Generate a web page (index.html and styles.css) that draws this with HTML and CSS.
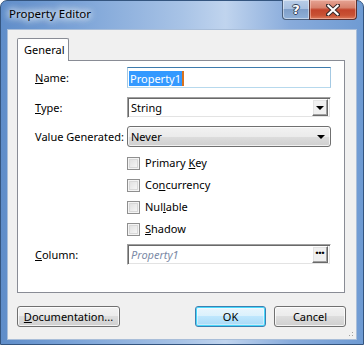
FILE: index.html
```html
<!DOCTYPE html>
<html>
<head>
<meta charset="utf-8">
<link rel="stylesheet" href="styles.css">
</head>
<body>
<div class="window">
  <div class="titlebar">
    <span class="title">Property Editor</span>
    <div class="caption">
      <div class="cap-btn help"><span>?</span></div>
      <div class="cap-btn close">
        <svg width="14" height="12" viewBox="0 0 14 12">
          <path d="M2 1.5 L12 10.5 M12 1.5 L2 10.5" stroke="#3a2a2a" stroke-width="4.2" stroke-linecap="square"/>
          <path d="M2.4 1.8 L11.6 10.2 M11.6 1.8 L2.4 10.2" stroke="#fff" stroke-width="2.2" stroke-linecap="square"/>
        </svg>
      </div>
    </div>
  </div>
  <div class="client">
    <div class="tabstrip"><div class="tab">General</div></div>
    <div class="panel">
      <div class="row r-name">
        <label class="lbl"><u>N</u>ame:</label>
        <div class="textbox focused"><span class="sel">Property1</span></div>
      </div>
      <div class="row r-type">
        <label class="lbl"><u>T</u>ype:</label>
        <div class="sunken combo-edit"><span class="val">String</span><div class="raised dd"><span class="arrow"></span></div></div>
      </div>
      <div class="row r-vg">
        <label class="lbl">Value Generated:</label>
        <div class="combo"><span class="val">Never</span><span class="arrow"></span></div>
      </div>
      <div class="checks">
        <div class="check"><span class="box"></span><span>Primary <u>K</u>ey</span></div>
        <div class="check"><span class="box"></span><span>Co<u>n</u>currency</span></div>
        <div class="check"><span class="box"></span><span>Nul<u>l</u>able</span></div>
        <div class="check"><span class="box"></span><span><u>S</u>hadow</span></div>
      </div>
      <div class="row r-col">
        <label class="lbl"><u>C</u>olumn:</label>
        <div class="sunken combo-edit"><span class="val ph">Property1</span><div class="raised ell">&middot;&middot;&middot;</div></div>
      </div>
    </div>
    <div class="buttons">
      <button class="btn doc"><u>D</u>ocumentation...</button>
      <span class="spacer"></span>
      <button class="btn ok">OK</button>
      <button class="btn cancel">Cancel</button>
    </div>
    <span class="grip"></span>
  </div>
</div>
</body>
</html>
```

FILE: styles.css
```css
* { box-sizing: border-box; }
html, body { margin: 0; padding: 0; }
body {
  width: 364px; height: 345px; overflow: hidden;
  font-family: "Noto Sans", "Liberation Sans", sans-serif;
  font-size: 11px; color: #000;
  background: #fff;
  white-space: nowrap;
}
.window {
  width: 364px; height: 345px;
  border: 1px solid #34557f;
  border-radius: 7px 7px 0 0;
  background: linear-gradient(90deg, #5f8dc9 0%, #7ba3d7 20%, #a8c3e6 50%, #c0d4ee 62%, #88abdb 80%, #6f9bd3 100%);
  display: flex; flex-direction: column;
  position: relative;
}
.titlebar {
  height: 28px; display: flex; align-items: flex-start;
  padding-left: 8px;
}
.title {
  margin-top: 5px;
  font-size: 11.5px;
  line-height: 16px;
  text-shadow: 0 0 6px #fff, 0 0 8px #fff, 0 0 10px #e8f0fa;
}
.caption { margin-left: auto; margin-right: 6px; margin-top: -1px; display: flex; }
.cap-btn {
  height: 20px; display: flex; align-items: center; justify-content: center;
  border: 1px solid #4a5f7c;
  border-top: none;
}
.help {
  width: 27px;
  border-radius: 0 0 0 4px;
  border-right: none;
  background: linear-gradient(#b8cde8 0%, #a8c0e0 45%, #7f9fc9 50%, #8fb0d8 100%);
  box-shadow: inset 0 0 0 1px rgba(255,255,255,0.45);
}
.help span {
  font-family: "DejaVu Sans", sans-serif; font-weight: bold; font-size: 13px; color: #fff;
  text-shadow: 1px 0 #33435a, -1px 0 #33435a, 0 1px #33435a, 0 -1px #33435a;
  line-height: 14px;
}
.close {
  width: 48px;
  border-radius: 0 0 4px 0;
  background: linear-gradient(#e6a494 0%, #d7826d 40%, #c3442b 52%, #c85134 80%, #dc7a5c 100%);
  box-shadow: inset 0 0 0 1px rgba(255,220,210,0.45);
  border-color: #5a3232;
}
.client {
  margin: 0 6px;
  height: 311px;
  background: #f0f0f0;
  border: 1px solid #a9bed9;
  padding: 8px 10px 0 9px;
  display: flex; flex-direction: column;
  position: relative;
}
.tabstrip { display: flex; height: 23px; position: relative; z-index: 1; }
.tab {
  width: 52px; height: 23px;
  background: #fff;
  border: 1px solid #898c95; border-bottom: none;
  border-radius: 2px 2px 0 0;
  padding: 3px 0 0 6px;
  line-height: 16px;
}
.panel {
  margin-top: -1px;
  width: 328px; height: 233px;
  background: #fff;
  border: 1px solid #898c95;
  padding: 6px 0 0 17px;
  display: flex; flex-direction: column;
}
.row { display: flex; align-items: center; height: 21px; }
.lbl { width: 92px; line-height: 16px; }
.r-type { margin-top: 9px; }
.r-vg { margin-top: 8px; }
.r-col { margin-top: 4px; }
.textbox {
  width: 204px; height: 21px;
  border: 1px solid; border-color: #3d7bad #a4c9e3 #b7d9ed #a4c9e3;
  background: #fff;
  padding: 1px 0 0 1px;
  display: flex; align-items: center;
}
.sel {
  background: #3399ff; color: #fff; line-height: 15px; padding: 0 1px;
  border-right: 2px solid #d9731f;
}
.sunken {
  width: 204px; height: 21px;
  border: 1px solid; border-color: #a0a0a0 #fff #fff #a0a0a0;
  box-shadow: inset 1px 1px #696969, inset -1px -1px #e3e3e3;
  background: #fff;
  display: flex; align-items: center;
  padding: 0 2px 0 3px;
}
.val { line-height: 16px; }
.ph { font-style: italic; color: #7b8aa6; }
.raised {
  margin-left: auto;
  width: 16px; height: 17px;
  background: #f0f0f0;
  border: 1px solid; border-color: #fff #696969 #696969 #fff;
  box-shadow: inset -1px -1px #a0a0a0, inset 1px 1px #e3e3e3;
  display: flex; align-items: center; justify-content: center;
}
.arrow {
  width: 0; height: 0;
  border-left: 4px solid transparent; border-right: 4px solid transparent;
  border-top: 4px solid #000;
}
.dd .arrow { margin-top: 1px; }
.ell {
  font-weight: bold; font-size: 14px; line-height: 10px; letter-spacing: -1px;
  padding-bottom: 4px; padding-right: 1px;
}
.combo {
  width: 204px; height: 21px;
  border: 1px solid #707070; border-radius: 3px;
  background: linear-gradient(#f2f2f2 0%, #ebebeb 50%, #dddddd 50%, #cfcfcf 100%);
  box-shadow: inset 0 0 0 1px rgba(255,255,255,0.7);
  display: flex; align-items: center;
  padding: 0 5px 0 3px;
}
.combo .arrow { margin-left: auto; }
.checks { margin-left: 92px; margin-top: 5px; display: flex; flex-direction: column; }
.check { height: 22px; display: flex; align-items: center; line-height: 16px; }
.box {
  width: 13px; height: 13px; margin-right: 5px;
  border: 1px solid #8f8f8f;
  background: linear-gradient(135deg, #dcdcdc, #fbfbfb);
  box-shadow: inset 0 0 0 1px #f4f4f4, inset 0 0 0 2px #d8d8d8;
}
.buttons { display: flex; margin-top: 13px; height: 21px; }
.spacer { flex: 1; }
.btn {
  font: inherit; color: #000;
  height: 21px; padding: 0;
  border: 1px solid #707070; border-radius: 3px;
  background: linear-gradient(#f2f2f2 0%, #ebebeb 50%, #dddddd 50%, #cfcfcf 100%);
  box-shadow: inset 0 0 0 1px rgba(255,255,255,0.75);
  line-height: 16px;
}
.doc { width: 103px; }
.ok {
  width: 71px; margin-right: 8px;
  border-color: #3c7fb1;
  box-shadow: inset 0 0 0 1px #48d8fb, inset 0 0 0 2px rgba(255,255,255,0.4);
  background: linear-gradient(#eaf6fd 0%, #d9f0fc 50%, #bee6fd 50%, #a7d9f5 100%);
}
.cancel { width: 72px; }
.grip {
  position: absolute; right: 1px; bottom: 1px; width: 10px; height: 10px;
  background-image: radial-gradient(circle, #a0a0a0 0.8px, transparent 1px);
  background-size: 3px 3px;
  clip-path: polygon(100% 0, 100% 100%, 0 100%);
}
```
